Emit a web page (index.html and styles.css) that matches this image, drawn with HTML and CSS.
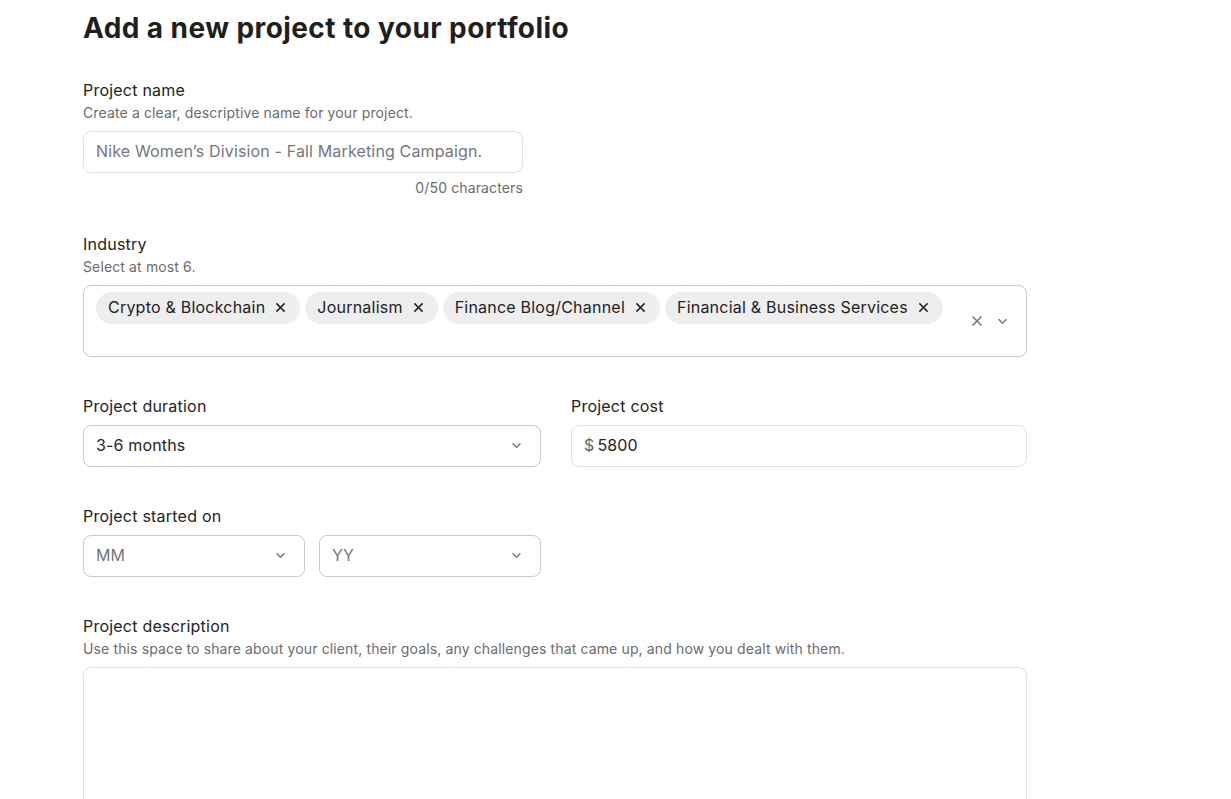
FILE: index.html
```html
<!DOCTYPE html>
<html lang="en">
<head>
<meta charset="utf-8">
<title>Add a new project</title>
<link rel="stylesheet" href="styles.css">
</head>
<body>
<main class="page">
  <h1 class="title">Add a new project to your portfolio</h1>

  <section class="field field-name">
    <label class="label">Project name</label>
    <p class="help">Create a clear, descriptive name for your project.</p>
    <div class="input input-light name-input"><span class="placeholder">Nike Women’s Division - Fall Marketing Campaign.</span></div>
    <p class="counter">0/50 characters</p>
  </section>

  <section class="field field-industry">
    <label class="label">Industry</label>
    <p class="help">Select at most 6.</p>
    <div class="multi">
      <div class="chips">
        <span class="chip">Crypto &amp; Blockchain <svg class="chip-x" viewBox="0 0 12 12"><path d="M1.5 1.5l9 9M10.5 1.5l-9 9"/></svg></span>
        <span class="chip">Journalism <svg class="chip-x" viewBox="0 0 12 12"><path d="M1.5 1.5l9 9M10.5 1.5l-9 9"/></svg></span>
        <span class="chip">Finance Blog/Channel <svg class="chip-x" viewBox="0 0 12 12"><path d="M1.5 1.5l9 9M10.5 1.5l-9 9"/></svg></span>
        <span class="chip">Financial &amp; Business Services <svg class="chip-x" viewBox="0 0 12 12"><path d="M1.5 1.5l9 9M10.5 1.5l-9 9"/></svg></span>
      </div>
      <div class="multi-actions">
        <svg class="clear-x" viewBox="0 0 12 12"><path d="M1.5 1.5l9 9M10.5 1.5l-9 9"/></svg>
        <svg class="chev" viewBox="0 0 12 8"><path d="M1.5 1.5l4.5 4.5 4.5-4.5"/></svg>
      </div>
    </div>
  </section>

  <section class="row">
    <div class="col">
      <label class="label">Project duration</label>
      <div class="input select"><span class="value">3-6 months</span><svg class="chev" viewBox="0 0 12 8"><path d="M1.5 1.5l4.5 4.5 4.5-4.5"/></svg></div>
    </div>
    <div class="col">
      <label class="label">Project cost</label>
      <div class="input input-light"><span class="currency">$</span><span class="value">5800</span></div>
    </div>
  </section>

  <section class="field field-date">
    <label class="label">Project started on</label>
    <div class="date-row">
      <div class="input select date"><span class="placeholder">MM</span><svg class="chev" viewBox="0 0 12 8"><path d="M1.5 1.5l4.5 4.5 4.5-4.5"/></svg></div>
      <div class="input select date"><span class="placeholder">YY</span><svg class="chev" viewBox="0 0 12 8"><path d="M1.5 1.5l4.5 4.5 4.5-4.5"/></svg></div>
    </div>
  </section>

  <section class="field field-desc">
    <label class="label">Project description</label>
    <p class="help">Use this space to share about your client, their goals, any challenges that came up, and how you dealt with them.</p>
    <div class="textarea"></div>
  </section>
</main>
</body>
</html>
```

FILE: styles.css
```css
* { box-sizing: border-box; }
html, body { margin: 0; padding: 0; background: #fff; }
body {
  font-family: Inter, "Noto Sans", "Liberation Sans", sans-serif;
  color: #222325;
  overflow: hidden;
  height: 799px;
}
.page {
  width: 944px;
  margin-left: 83px;
  padding-top: 10px;
}
.title {
  margin: 0;
  font-size: 28px;
  line-height: 36px;
  font-weight: 700;
  letter-spacing: 0.42px;
  color: #1f1f1f;
}
.field, .row { display: block; }
.field-name { margin-top: 32px; width: 440px; }
.label {
  display: block;
  font-size: 16px;
  line-height: 24px;
  font-weight: 400;
  letter-spacing: 0.22px;
  color: #222325;
}
.help {
  margin: 1px 0 0;
  font-size: 14px;
  line-height: 20px;
  letter-spacing: 0.13px;
  color: #6b6b6f;
}
.input {
  height: 42px;
  border: 1px solid #c9c9cc;
  border-radius: 8px;
  display: flex;
  align-items: center;
  padding: 0 12px 2px;
  font-size: 16px;
  letter-spacing: 0.15px;
}
.input-light { border-color: #e2e2e4; }
.name-input { margin-top: 8px; }
.placeholder { color: #74767e; }
.counter {
  margin: 5px 0 0;
  text-align: right;
  font-size: 14px;
  line-height: 20px;
  letter-spacing: 0.13px;
  color: #6b6b6f;
}
.field-industry { margin-top: 34px; }
.multi {
  margin-top: 8px;
  height: 72px;
  border: 1px solid #c9c9cc;
  border-radius: 8px;
  display: flex;
  padding: 6px 12px;
}
.chips {
  flex: 1;
  display: flex;
  flex-wrap: wrap;
  gap: 5px;
  align-content: flex-start;
}
.chip {
  display: inline-flex;
  align-items: center;
  height: 32px;
  padding: 0 14px 2px 12px;
  border-radius: 16px;
  background: #eeeeee;
  font-size: 16px;
  letter-spacing: 0.22px;
  color: #222325;
  gap: 10px;
}
.chip-x {
  width: 11px;
  height: 11px;
  fill: none;
  stroke: #222325;
  stroke-width: 1.6;
}
.multi-actions {
  display: flex;
  align-items: center;
  gap: 14px;
  padding-right: 6px;
}
.clear-x {
  width: 12px;
  height: 12px;
  fill: none;
  stroke: #74767e;
  stroke-width: 1.5;
}
.chev {
  width: 11px;
  height: 7px;
  fill: none;
  stroke: #74767e;
  stroke-width: 1.6;
}
.row {
  margin-top: 37px;
  display: grid;
  grid-template-columns: 458px 456px;
  column-gap: 30px;
}
.col .input { margin-top: 7px; }
.select { justify-content: space-between; padding-right: 18px; }
.value { color: #222325; }
.currency { color: #62646a; margin-right: 3px; }
.field-date { margin-top: 37px; }
.date-row {
  margin-top: 7px;
  display: flex;
  gap: 14px;
}
.date { width: 222px; }
.field-desc { margin-top: 37px; }
.textarea {
  margin-top: 8px;
  height: 220px;
  border: 1px solid #e2e2e4;
  border-radius: 8px;
}
```
